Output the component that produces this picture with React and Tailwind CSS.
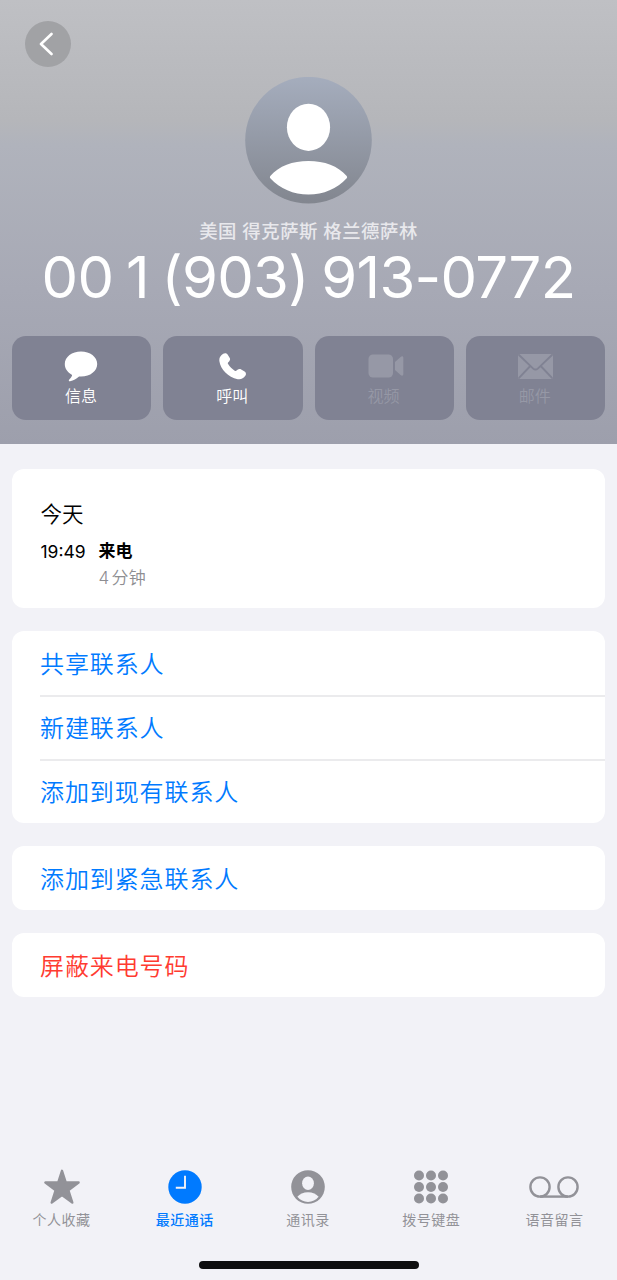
const actions = [
  { label: '信息', icon: MessageIcon },
  { label: '呼叫', icon: PhoneIcon },
  { label: '视频', icon: VideoIcon, disabled: true },
  { label: '邮件', icon: MailIcon, disabled: true },
]

const tabs = [
  { label: '个人收藏', icon: StarIcon },
  { label: '最近通话', icon: ClockIcon, active: true },
  { label: '通讯录', icon: ContactIcon },
  { label: '拨号键盘', icon: KeypadIcon },
  { label: '语音留言', icon: VoicemailIcon },
]

function MessageIcon() {
  return (
    <svg width="34" height="32" viewBox="0 0 34 32" fill="currentColor">
      <path d="M17 1.500C8 1.500.8 6.900.8 14c0 4.500 2.600 8.200 6.600 10.400.7.400.8.900.5 1.500-.5 1.200-1.500 2.300-2.600 3.500-1 1.100-.4 2 .8 1.800 3.500-.4 6.500-2.600 8.300-4.200.6-.5 1-.6 1.700-.5 9.900.4 17.100-5.300 17.100-12.500C33.200 6.900 26 1.500 17 1.500Z" />
    </svg>
  )
}

function PhoneIcon() {
  return (
    <svg width="28" height="28" viewBox="0 0 28 28" fill="currentColor" className="ml-px">
      <path d="M4.200 1.800C5.700.8 7.600 1.100 8.600 2.600l2 3.200c.8 1.300.6 2.600-.5 3.600l-.8.800c-.6.600-.6 1.200-.2 1.900 1.600 2.600 4.100 5 6.600 6.700.7.400 1.300.4 1.900-.2l.9-.8c1.100-1 2.400-1.200 3.700-.4l3.400 2.200c1.500 1 1.800 2.700.7 4.200-1.800 2.600-4.400 4.100-7.600 3.400C9.200 25.300 1.500 17.300.4 9.300-.1 5.900 1.500 3.400 4.200 1.800Z" />
    </svg>
  )
}

function VideoIcon() {
  return (
    <svg width="36" height="24" viewBox="0 0 36 24" fill="currentColor" className="ml-1">
      <rect x="0.500" y="0.500" width="24.500" height="23" rx="4.500" />
      <path d="M27 7.900 32.600 2.900c1.400-1.200 2.700-.7 2.700.8v16.600c0 1.500-1.300 2-2.700.8L27 16.100Z" />
    </svg>
  )
}

function MailIcon() {
  return (
    <svg width="35" height="25" viewBox="0 0 35 25" className="ml-0.5">
      <rect width="35" height="25" rx="2.500" fill="currentColor" />
      <path
        d="M.8.800 15.200 14.600q2.300 2 4.600 0L34.200.8M.8 24.200 12.300 12M34.200 24.200 22.700 12"
        fill="none"
        stroke="#808293"
        strokeWidth="1.900"
      />
    </svg>
  )
}

function StarIcon() {
  return (
    <svg width="38" height="36" viewBox="0 0 38 36" fill="currentColor">
      <path
        d="M19 1.800 22.700 13.300 35.600 13.500 25.300 21.200 29.300 33.600 19 26.100 8.700 33.600 12.700 21.200 2.400 13.500 15.300 13.300Z"
        stroke="currentColor"
        strokeWidth="2.400"
        strokeLinejoin="round"
      />
    </svg>
  )
}

function ClockIcon() {
  return (
    <svg width="34" height="34" viewBox="0 0 34 34" fill="none">
      <circle cx="17" cy="17" r="16.700" fill="currentColor" />
      <path d="M17 5.700V17.700H7.800" stroke="#f2f2f7" strokeWidth="1.900" />
    </svg>
  )
}

function ContactIcon() {
  return (
    <svg width="34" height="34" viewBox="0 0 34 34">
      <circle cx="17" cy="17" r="16.800" fill="currentColor" />
      <ellipse cx="17" cy="13.200" rx="5.900" ry="6.700" fill="#f2f2f7" />
      <path d="M6.400 26.800C8.500 24 12.500 22.200 17 22.200s8.500 1.800 10.600 4.600C25 30 21.200 32 17 32S9 30 6.400 26.800Z" fill="#f2f2f7" />
    </svg>
  )
}

function KeypadIcon() {
  const offsets = [5, 17, 29]
  return (
    <svg width="34" height="34" viewBox="0 0 34 34" fill="currentColor">
      {offsets.map((y) =>
        offsets.map((x) => <circle key={`${x}-${y}`} cx={x} cy={17 + (y - 17) * 0.96} r="5" />)
      )}
    </svg>
  )
}

function VoicemailIcon() {
  return (
    <svg width="50" height="22" viewBox="0 0 50 22" fill="none" stroke="currentColor" strokeWidth="2.400">
      <circle cx="11" cy="11" r="9.600" />
      <circle cx="39" cy="11" r="9.600" />
      <path d="M11 20.600H39" />
    </svg>
  )
}

function Avatar() {
  return (
    <svg width="127" height="127" viewBox="0 0 127 127" className="block">
      <defs>
        <linearGradient id="avatar" x1="0" y1="0" x2="0" y2="1">
          <stop offset="0" stopColor="#a5adbd" />
          <stop offset="1" stopColor="#82868f" />
        </linearGradient>
      </defs>
      <circle cx="63.500" cy="63.200" r="63.300" fill="url(#avatar)" />
      <ellipse cx="63.500" cy="50.300" rx="21.600" ry="23.600" fill="#fff" />
      <path d="M25.300 98.900C34 89 47.500 84 63.500 84S93 89 101.700 98.900q.9 1.200 0 2.300C92 111.900 78.500 117.400 63.500 117.400S35 111.900 25.300 101.200q-.9-1.100 0-2.300Z" fill="#fff" />
    </svg>
  )
}

function ListCard({ items, danger }) {
  return (
    <div className="overflow-hidden rounded-[12px] bg-white pl-[28px]">
      {items.map((item, i) => (
        <button
          key={item}
          className={`flex h-16 w-full items-center text-left text-[24px] font-[350] tracking-[0.9px] ${
            i > 0 ? 'border-t-2 border-[#ebebed] pt-0.5' : 'pt-1'
          } ${danger ? 'text-[#ff3b30]' : 'text-[#007aff]'}`}
        >
          {item}
        </button>
      ))}
    </div>
  )
}

export default function App() {
  return (
    <div className="flex h-[1280px] w-[617px] flex-col overflow-hidden bg-[#f2f2f7] font-[Inter,'Noto_Sans_CJK_SC',sans-serif]">
      {/* Header */}
      <header className="flex h-[444px] shrink-0 flex-col bg-[linear-gradient(180deg,#bfc0c4_0px,#b5b6ba_120px,#b0b3bc_145px,#a7a9b5_290px,#9d9fac_444px)] px-3">
        <div className="flex h-[77px] pt-[21px] pl-[12.500px]">
          <button className="flex size-[46px] items-center justify-center rounded-full bg-[#a1a2a5]" aria-label="返回">
            <svg width="14" height="24" viewBox="0 0 14 24" fill="none" className="mr-[3px]">
              <path
                d="M12.500 2 2 12 12.500 22"
                stroke="#fff"
                strokeWidth="2.600"
                strokeLinecap="round"
                strokeLinejoin="round"
              />
            </svg>
          </button>
        </div>

        <div className="flex flex-col items-center">
          <Avatar />
          <p className="mt-[13px] h-7 text-[18.400px] leading-[29px] font-medium tracking-[0.5px] whitespace-nowrap text-[#e8e8ec]">
            美国 得克萨斯 格兰德萨林
          </p>
          <h1 className="h-[66px] text-[58px] leading-[64px] tracking-[-0.7px] [word-spacing:-3px] whitespace-nowrap text-white">
            00 1 (903) 913-0772
          </h1>
        </div>

        <div className="mt-[25px] grid grid-cols-4 gap-3">
          {actions.map(({ label, icon: Icon, disabled }) => (
            <button
              key={label}
              disabled={disabled}
              className={`flex h-[84px] flex-col items-center rounded-[14px] bg-[#808293] pt-[14px] pr-px ${
                disabled ? 'text-[#9698a6]' : 'text-white'
              }`}
            >
              <span className="flex h-8 items-center">
                <Icon />
              </span>
              <span className="text-[16px] leading-[29px] font-[350]">{label}</span>
            </button>
          ))}
        </div>
      </header>

      <main className="flex flex-1 flex-col gap-[23px] px-3 pt-[25px]">
        {/* Call log */}
        <section className="h-[139px] rounded-[12px] bg-white pt-[29px] pl-[28.500px]">
          <h2 className="text-[21.500px] leading-[32px] font-[350] text-black">今天</h2>
          <div className="mt-2 flex text-[17px] leading-[27px]">
            <span className="w-[58px] text-[17.500px] text-black">19:49</span>
            <div>
              <p className="font-bold text-black">来电</p>
              <p className="font-[350] tracking-[0.3px] text-[#8e8e92] [word-spacing:-3px]">4 分钟</p>
            </div>
          </div>
        </section>

        <ListCard items={['共享联系人', '新建联系人', '添加到现有联系人']} />
        <ListCard items={['添加到紧急联系人']} />
        <ListCard items={['屏蔽来电号码']} danger />
      </main>

      {/* Tab bar */}
      <nav className="grid shrink-0 grid-cols-5 pr-px">
        {tabs.map(({ label, icon: Icon, active }) => (
          <button
            key={label}
            className={`flex flex-col items-center ${active ? 'font-medium text-[#007aff]' : 'text-[#929298]'}`}
          >
            <span className="flex h-9 items-center">
              <Icon />
            </span>
            <span className="mt-1 text-[14px] leading-[22px] tracking-[0.5px]">{label}</span>
          </button>
        ))}
      </nav>
      <div className="mt-[30px] mb-[11px] h-2 w-[220px] shrink-0 self-center rounded-full bg-[#0e0e0f]" />
    </div>
  )
}
